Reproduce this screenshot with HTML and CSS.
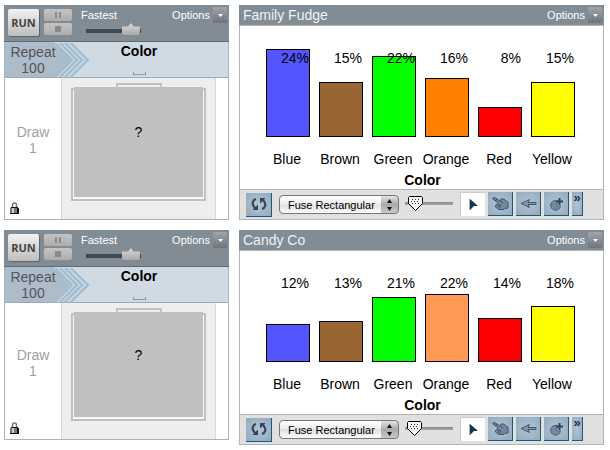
FILE: index.html
```
<!DOCTYPE html>
<html lang="en">
<head>
  <meta charset="UTF-8" />
  <meta name="viewport" content="width=device-width, initial-scale=1.0" />
  <title>Candy Color Samplers</title>
  <link rel="stylesheet" href="styles.css">
</head>
<body>
  <svg class="sprites" aria-hidden="true">
    <symbol id="caret" viewBox="0 0 5 3"><path d="M0 0h5L2.500 3z" fill="#fff"/></symbol>
    <symbol id="pause" viewBox="0 0 6 6"><path d="M0 0h2v6H0zM4 0h2v6H4z" fill="#8a8a8a"/></symbol>
    <symbol id="stop" viewBox="0 0 6 6"><path d="M0 0h6v6H0z" fill="#8a8a8a"/></symbol>
    <symbol id="chevrons" viewBox="0 0 36 34">
      <path d="M0 0h18l18 17-18 17H0l17-17z" fill="#b9d5e8"/>
      <path d="M1 0l17 17L1 34M6 0l17 17L6 34M11 0l17 17-17 17M17 0l17 17-17 17" fill="none" stroke="#a5b4bf" stroke-width="1.500"/>
    </symbol>
    <symbol id="lock" viewBox="0 0 9 12">
      <path d="M2.500 6V3q0-2 2-2t2 2v3" fill="none" stroke="#777" stroke-width="1.500"/>
      <path d="M1 5h7v1h1v6H0V6h1z" fill="#111"/>
      <path d="M0 6h7v5H0z" fill="#777"/>
      <path d="M2 6h2v5H2z" fill="#ccc"/>
    </symbol>
    <symbol id="refresh" viewBox="0 0 16 14">
      <path d="M5 2C1.500 3 1 6.500 2.500 9q.8 1.500 2 2.200M11 12c3.500-1 4-4.500 2.500-7q-.8-1.500-2-2.200" fill="none" stroke="#34465a" stroke-width="2.200"/>
      <path d="M1.500 13h5.500V7.500zM14.500 1H9v5.500z" fill="#34465a"/>
    </symbol>
    <symbol id="steps" viewBox="0 0 5 12"><path d="M2.500 0L5 4H0zM2.500 12L5 8H0z" fill="#111"/></symbol>
    <symbol id="pointer" viewBox="0 0 9 12">
      <path d="M1 0l8 7H5l-4 4z" fill="#223247"/>
      <path d="M.5 0v11" stroke="#8fb5d5"/>
    </symbol>
    <symbol id="hand" viewBox="0 0 17 13">
      <path d="M1 1l1.500-.5L8 4l1-2h3l2 2 2 1v6l-3 .5-1 1H7L4.500 11 3 9l2-1.500L6 6 1 2z" fill="#74889c" stroke="#3f556b"/>
      <path d="M8 4l3 2M5 8l4 .5M6 10l3 0M3 4l3-2" fill="none" stroke="#3f556b"/>
    </symbol>
    <symbol id="left" viewBox="0 0 17 11">
      <path d="M1 5.500L9.500 1.500 8 4.500h8v2H8l1.500 3z" fill="#8298ac" stroke="#40566c"/>
    </symbol>
    <symbol id="add" viewBox="0 0 15 14">
      <path d="M8 3.500a5 5 0 1 0 3.500 5.500H8z" fill="#74889c" stroke="#50677d"/>
      <path d="M10.500 1v7M7 4.500h7" stroke="#2e4359" stroke-width="2"/>
    </symbol>
  </svg>

  <main class="workspace">
    <section class="sampler">
      <header class="sampler-head">
        <button class="run" type="button">RUN</button>
        <div class="transport">
          <button type="button" aria-label="Pause" disabled><svg width="6" height="6"><use href="#pause"/></svg></button>
          <button type="button" aria-label="Stop" disabled><svg width="6" height="6"><use href="#stop"/></svg></button>
        </div>
        <div class="speed">
          <label for="speed-1">Fastest</label>
          <input id="speed-1" type="range" min="0" max="100" value="97">
        </div>
        <button class="options" type="button">Options <span class="drop"><svg width="5" height="3"><use href="#caret"/></svg></span></button>
      </header>
      <div class="band">
        <div class="repeat">Repeat<br>100</div>
        <svg class="chevrons" width="36" height="34"><use href="#chevrons"/></svg>
        <h2 class="attribute">Color</h2>
      </div>
      <div class="device">
        <div class="draws">
          <p>Draw<br>1</p>
          <svg width="9" height="12"><use href="#lock"/></svg>
        </div>
        <div class="stage">
          <div class="neck"></div>
          <div class="jar"><div class="cover">?</div></div>
        </div>
      </div>
    </section>

    <section class="graph">
      <header class="graph-head">
        <h2>Family Fudge</h2>
        <button class="options" type="button">Options <span class="drop"><svg width="5" height="3"><use href="#caret"/></svg></span></button>
      </header>
      <div class="plot">
        <div class="bar-cell"><span class="percent">24%</span><div class="bar blue" style="height: 88px"></div></div>
        <div class="bar-cell"><span class="percent">15%</span><div class="bar brown" style="height: 55px"></div></div>
        <div class="bar-cell"><span class="percent">22%</span><div class="bar green" style="height: 81px"></div></div>
        <div class="bar-cell"><span class="percent">16%</span><div class="bar orange" style="height: 59px"></div></div>
        <div class="bar-cell"><span class="percent">8%</span><div class="bar red" style="height: 30px"></div></div>
        <div class="bar-cell"><span class="percent">15%</span><div class="bar yellow" style="height: 55px"></div></div>
      </div>
      <div class="categories">
        <span>Blue</span><span>Brown</span><span>Green</span><span>Orange</span><span>Red</span><span>Yellow</span>
      </div>
      <h3 class="axis">Color</h3>
      <footer class="tools">
        <button class="tool refresh" type="button" aria-label="Refresh"><svg width="16" height="14"><use href="#refresh"/></svg></button>
        <div class="picker">
          <select aria-label="Icon type"><option>Fuse Rectangular</option></select>
          <svg width="5" height="12"><use href="#steps"/></svg>
        </div>
        <input class="size" type="range" min="0" max="100" value="9" aria-label="Icon size">
        <div class="modes">
          <button class="tool active" type="button" aria-label="Select"><svg width="9" height="12"><use href="#pointer"/></svg></button>
          <button class="tool" type="button" aria-label="Drag"><svg width="17" height="13"><use href="#hand"/></svg></button>
          <button class="tool" type="button" aria-label="Back"><svg width="17" height="11"><use href="#left"/></svg></button>
          <button class="tool" type="button" aria-label="Add"><svg width="15" height="14"><use href="#add"/></svg></button>
          <button class="tool more" type="button" aria-label="More tools">»</button>
        </div>
      </footer>
    </section>

    <section class="sampler short">
      <header class="sampler-head">
        <button class="run" type="button">RUN</button>
        <div class="transport">
          <button type="button" aria-label="Pause" disabled><svg width="6" height="6"><use href="#pause"/></svg></button>
          <button type="button" aria-label="Stop" disabled><svg width="6" height="6"><use href="#stop"/></svg></button>
        </div>
        <div class="speed">
          <label for="speed-2">Fastest</label>
          <input id="speed-2" type="range" min="0" max="100" value="97">
        </div>
        <button class="options" type="button">Options <span class="drop"><svg width="5" height="3"><use href="#caret"/></svg></span></button>
      </header>
      <div class="band">
        <div class="repeat">Repeat<br>100</div>
        <svg class="chevrons" width="36" height="34"><use href="#chevrons"/></svg>
        <h2 class="attribute">Color</h2>
      </div>
      <div class="device">
        <div class="draws">
          <p>Draw<br>1</p>
          <svg width="9" height="12"><use href="#lock"/></svg>
        </div>
        <div class="stage">
          <div class="neck"></div>
          <div class="jar"><div class="cover">?</div></div>
        </div>
      </div>
    </section>

    <section class="graph">
      <header class="graph-head">
        <h2>Candy Co</h2>
        <button class="options" type="button">Options <span class="drop"><svg width="5" height="3"><use href="#caret"/></svg></span></button>
      </header>
      <div class="plot">
        <div class="bar-cell"><span class="percent">12%</span><div class="bar blue" style="height: 38px"></div></div>
        <div class="bar-cell"><span class="percent">13%</span><div class="bar brown" style="height: 41px"></div></div>
        <div class="bar-cell"><span class="percent">21%</span><div class="bar green" style="height: 65px"></div></div>
        <div class="bar-cell"><span class="percent">22%</span><div class="bar peach" style="height: 68px"></div></div>
        <div class="bar-cell"><span class="percent">14%</span><div class="bar red" style="height: 44px"></div></div>
        <div class="bar-cell"><span class="percent">18%</span><div class="bar yellow" style="height: 56px"></div></div>
      </div>
      <div class="categories">
        <span>Blue</span><span>Brown</span><span>Green</span><span>Orange</span><span>Red</span><span>Yellow</span>
      </div>
      <h3 class="axis">Color</h3>
      <footer class="tools">
        <button class="tool refresh" type="button" aria-label="Refresh"><svg width="16" height="14"><use href="#refresh"/></svg></button>
        <div class="picker">
          <select aria-label="Icon type"><option>Fuse Rectangular</option></select>
          <svg width="5" height="12"><use href="#steps"/></svg>
        </div>
        <input class="size" type="range" min="0" max="100" value="6" aria-label="Icon size">
        <div class="modes">
          <button class="tool active" type="button" aria-label="Select"><svg width="9" height="12"><use href="#pointer"/></svg></button>
          <button class="tool" type="button" aria-label="Drag"><svg width="17" height="13"><use href="#hand"/></svg></button>
          <button class="tool" type="button" aria-label="Back"><svg width="17" height="11"><use href="#left"/></svg></button>
          <button class="tool" type="button" aria-label="Add"><svg width="15" height="14"><use href="#add"/></svg></button>
          <button class="tool more" type="button" aria-label="More tools">»</button>
        </div>
      </footer>
    </section>
  </main>
</body>
</html>
```
FILE: styles.css
```
* {
  box-sizing: border-box;
}
body {
  margin: 0;
  background: #fff;
  color: #000;
  font: 14px/16px "Liberation Sans", Arial, sans-serif;
}
h2, h3, p {
  margin: 0;
  font-size: 14px;
}
button, select, input {
  margin: 0;
  padding: 0;
  border: 0;
  font-family: inherit;
}
svg {
  display: block;
  flex: none;
}
.sprites {
  display: none;
}
.workspace {
  display: grid;
  grid-template-columns: 225px 1fr;
  gap: 10px;
  align-items: start;
  padding: 5px 6px 5px 4px;
}

/* sampler */
.sampler {
  display: flex;
  flex-direction: column;
  min-height: 215px;
  border: 1px solid #abb3b9;
  border-top: 0;
}
.sampler.short {
  min-height: 210px;
}
.sampler-head {
  display: flex;
  align-items: flex-start;
  height: 37px;
  margin: 0 -1px;
  padding: 4px 2px 0 4px;
  background: #828c94;
  border-bottom: 1px solid #5f6a73;
}
.run {
  width: 31px;
  height: 27px;
  border-radius: 2px;
  background: linear-gradient(#f2f2f2, #bdbdbd);
  box-shadow: 1px 1px 1px #5a6268;
  color: #444;
  font: bold 11px/27px "Open Sans", sans-serif;
}
.transport {
  display: grid;
  gap: 2px;
  margin-left: 5px;
}
.transport button {
  display: grid;
  place-items: center;
  width: 28px;
  height: 12px;
  border-radius: 2px;
  background: linear-gradient(#c4c4c4, #adadad);
}
.speed {
  display: flex;
  flex-direction: column;
  margin-left: 9px;
  color: #fff;
  font-size: 11px;
  line-height: 13px;
}
.speed input {
  width: 55px;
  height: 12px;
  margin: 1px 0 0 5px;
  appearance: none;
  background: none;
}
.speed input::-webkit-slider-runnable-track {
  height: 12px;
  background: linear-gradient(#3f4a54, #3f4a54) 0 6px / 100% 4px no-repeat;
}
.speed input::-webkit-slider-thumb {
  appearance: none;
  width: 18px;
  height: 12px;
  background: linear-gradient(#dcdcdc, #a8a8a8);
  clip-path: polygon(0 30%, 35% 30%, 50% 0, 65% 30%, 100% 30%, 100% 90%, 90% 100%, 10% 100%, 0 90%);
}
.options {
  display: flex;
  align-items: center;
  gap: 3px;
  margin-left: auto;
  background: none;
  color: #fff;
  font-size: 11px;
  line-height: 16px;
}
.sampler-head .options {
  margin-top: -2px;
}
.drop {
  display: grid;
  place-items: center;
  width: 14px;
  height: 16px;
  border-radius: 1px;
  background: linear-gradient(#a0a5aa, #6c747c);
}
.band {
  display: flex;
  height: 36px;
  background: #cfdae3;
  border-bottom: 1px solid #9dabb6;
}
.repeat {
  z-index: 1;
  width: 56px;
  padding-top: 2px;
  background: linear-gradient(#adbccb, #adbccb) 0 0 / 49px 100% no-repeat;
  color: #555;
  text-align: center;
}
.chevrons {
  margin: 1px 0 0 -7px;
  background: linear-gradient(to top right, #adbccb 50%, transparent 50%) 0 0 / 17px 17px no-repeat,
    linear-gradient(to bottom right, #adbccb 50%, transparent 50%) 0 17px / 17px 17px no-repeat;
}
.attribute {
  display: flex;
  flex-direction: column;
  align-items: center;
  width: 98px;
  padding-top: 1px;
}
.attribute::after {
  content: "";
  width: 11px;
  height: 2px;
  margin-top: 13px;
  border: 1px solid #8f9ba5;
  border-top: 0;
}
.device {
  display: flex;
  flex: 1;
}
.draws {
  display: flex;
  flex-direction: column;
  width: 56px;
  padding: 0 0 5px 5px;
  color: #a0a0a0;
}
.draws p {
  display: grid;
  flex: 1;
  align-content: center;
  margin-left: -5px;
  text-align: center;
}
.stage {
  display: flex;
  flex: 1;
  flex-direction: column;
  align-items: center;
  margin-right: 12px;
  padding: 5px 9px 18px;
  background: #eee;
  border: solid #d8d8d8;
  border-width: 0 1px;
}
.neck {
  width: 46px;
  height: 5px;
  border: 2px solid silver;
  border-bottom: 0;
}
.jar {
  display: flex;
  flex: 1;
  width: 100%;
  padding: 0 1px 2px;
  border: 2px solid silver;
  background: #f7f7f7;
}
.cover {
  display: grid;
  flex: 1;
  place-items: center;
  margin-top: -3px;
  padding-bottom: 20px;
  background: silver;
}

/* graph */
.graph {
  border: solid #b0b5b9;
  border-width: 0 1px;
}
.graph-head {
  display: flex;
  justify-content: space-between;
  align-items: center;
  margin: 0 -1px;
  height: 21px;
  padding: 0 2px 0 4px;
  background: #828c94;
  border-bottom: 1px solid #b0b5b9;
}
.graph-head h2 {
  color: #f0f2f3;
  font-weight: normal;
}
.plot, .categories {
  display: grid;
  grid-template-columns: repeat(6, minmax(0, 1fr));
  gap: 9px;
  padding: 0 28px 0 26px;
}
.plot {
  height: 111px;
}
.bar-cell {
  position: relative;
  display: flex;
  align-items: flex-end;
}
.bar {
  width: 100%;
  border: 1px solid #000;
}
.percent {
  position: absolute;
  top: 24px;
  right: 1px;
}
.blue { background: #5555ff; }
.brown { background: #996633; }
.green { background: #00ff00; }
.orange { background: #ff8000; }
.peach { background: #ff9955; }
.red { background: #ff0000; }
.yellow { background: #ffff00; }
.categories {
  padding-top: 14px;
}
.categories span {
  display: flex;
  justify-content: center;
  margin-right: 2px;
}
.axis {
  margin-top: 5px;
  padding-left: 2px;
  text-align: center;
}
.tools {
  display: flex;
  align-items: center;
  height: 31px;
  margin-top: 1px;
  padding-left: 6px;
  background: #e0e0e0;
  border-top: 1px solid #b0b5b9;
  border-bottom: 1px solid #b0b5b9;
}
.tool {
  display: grid;
  place-items: center;
  width: 25px;
  height: 24px;
  background: radial-gradient(#b2c4d4, #93aabd);
  border: solid #1a587d;
  border-width: 0 1px 1px 0;
}
.tool.refresh {
  width: 26px;
}
.tool.active {
  background: #fff;
  border: solid #ccc;
  border-width: 1px 0 0 1px;
}
.tool.more {
  width: 11px;
  place-items: start center;
  color: #223247;
  font-size: 13px;
  font-weight: bold;
  line-height: 11px;
}
.picker {
  position: relative;
  margin-left: 7px;
}
.picker select {
  display: block;
  width: 120px;
  height: 19px;
  padding-left: 8px;
  appearance: none;
  border: 1px solid #777;
  border-radius: 4px;
  background: linear-gradient(#e4e4e4, #aaa 50%, #c8c8c8) right / 17px 100% no-repeat, linear-gradient(#fff, #ececec 50%, #e0e0e0 50%, #fafafa);
  color: #000;
  font-size: 11px;
}
.picker svg {
  position: absolute;
  top: 4px;
  right: 7px;
  pointer-events: none;
}
.size {
  width: 48px;
  height: 16px;
  margin-left: 6px;
  appearance: none;
  background: none;
}
.size::-webkit-slider-runnable-track {
  height: 16px;
  background: linear-gradient(#888, #a8a8a8) 0 6px / 100% 3px no-repeat;
}
.size::-webkit-slider-thumb {
  appearance: none;
  width: 15px;
  height: 16px;
  background: url("data:image/svg+xml,%3Csvg xmlns='http://www.w3.org/2000/svg' width='15' height='16'%3E%3Cpath d='M1.500 .5h12l1 1v6l-7 7-7-7v-6z' fill='%23f4f4f4' stroke='%23000'/%3E%3Cpath d='M4 3.500h9M3 5.500h9M4 7.500h9' stroke='%23333' stroke-dasharray='1 2'/%3E%3C/svg%3E");
}
.modes {
  display: flex;
  gap: 3px;
  margin-left: 7px;
}
.size, .modes {
  margin-bottom: 2px;
}
.modes {
  margin-bottom: 1px;
}
```
